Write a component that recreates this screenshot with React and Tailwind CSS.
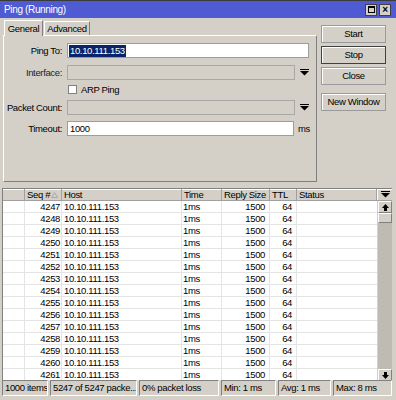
import React from "react";

const Arrow = () => (
  <svg width="9" height="7" viewBox="0 0 9 7" className="block">
    <rect x="0" y="0" width="9" height="1" fill="#000" />
    <polygon points="0,2 9,2 4.5,6.5" fill="#000" />
  </svg>
);

const ScrollUp = () => (
  <svg width="7" height="7" viewBox="0 0 7 7" className="block">
    <polygon points="3.5,0 7,4 0,4" fill="#000" />
    <rect x="2" y="4" width="3" height="3" fill="#000" />
  </svg>
);
const ScrollDown = () => (
  <svg width="7" height="7" viewBox="0 0 7 7" className="block">
    <rect x="2" y="0" width="3" height="3" fill="#000" />
    <polygon points="0,3 7,3 3.5,7" fill="#000" />
  </svg>
);

const SortUp = () => (
  <svg width="7" height="6" viewBox="0 0 7 6" className="block ml-[1px]">
    <polygon points="3.5,0.5 6.5,5.5 0.5,5.5" fill="none" stroke="#a8a8a8" strokeWidth="1" />
  </svg>
);

function Btn({ children, dark }) {
  return (
    <div
      className={
        "h-[18px] w-[65px] flex items-center justify-center bg-[#d4d0c8] border whitespace-nowrap " +
        (dark
          ? "border-[#404040] shadow-[inset_1px_1px_0_#ffffff]"
          : "border-[#9a9a9a] shadow-[inset_1px_1px_0_#ffffff]")
      }
    >
      {children}
    </div>
  );
}

export default function App() {
  const rows = Array.from({ length: 15 }, (_, i) => 4247 + i);
  return (
    <div className="w-[396px] h-[400px] bg-[#d4d0c8] flex flex-col overflow-hidden text-black text-[9.5px] leading-[12px] tracking-[-0.35px] whitespace-nowrap font-['Liberation_Sans',Arial,sans-serif]">
      {/* title bar */}
      <div className="h-[18px] border-t border-[#3a3a3a] bg-[#4f5bd2] flex items-center pl-[4px] pr-[5px]">
        <span className="text-white text-[10px] flex-1">Ping (Running)</span>
        <div className="flex gap-[2px]">
          <div className="w-[12px] h-[12px] bg-[#d4d0c8] border border-[#404040] flex items-center justify-center">
            <div className="w-[7px] h-[7px] border border-black border-t-2" />
          </div>
          <div className="w-[12px] h-[12px] bg-[#d4d0c8] border border-[#404040] flex items-center justify-center text-[10px] font-bold leading-none">
            ×
          </div>
        </div>
      </div>

      {/* upper area */}
      <div className="flex h-[164px]">
        <div className="ml-[3px] w-[314px] flex flex-col">
          <div className="h-[17px] flex items-end">
            <div className="h-[16px] w-[39px] ml-[1px] bg-[#d4d0c8] border-t border-l border-white border-r border-r-[#808080] flex items-center justify-center relative top-[1px] z-10">
              General
            </div>
            <div className="h-[14px] w-[46px] ml-[1px] bg-[#d4d0c8] border-t border-l border-white border-r border-r-[#808080] flex items-center justify-center">
              Advanced
            </div>
          </div>
          <div className="h-[147px] border border-t-white border-l-white border-b-[#808080] border-r-[#808080] flex flex-col pt-[7px]">
            {/* Ping To */}
            <div className="flex items-center h-[15px]">
              <div className="w-[59px] text-right pr-[1px]">Ping To:</div>
              <div className="ml-[4px] w-[242px] h-[15px] bg-white border border-[#9d9d9d] flex items-center pl-[1px]">
                <span className="bg-[#0a246a] text-white px-[1px]">10.10.111.153</span>
              </div>
            </div>
            {/* Interface */}
            <div className="flex items-center h-[15px] mt-[7px]">
              <div className="w-[59px] text-right pr-[1px] text-[#222]">Interface:</div>
              <div className="ml-[4px] w-[228px] h-[15px] bg-[#d4d0c8] border border-[#a8a8a8]" />
              <div className="ml-[5px]"><Arrow /></div>
            </div>
            {/* ARP */}
            <div className="flex items-center h-[11px] mt-[4px]">
              <div className="ml-[64px] w-[9px] h-[9px] bg-white border border-[#808080]" />
              <span className="ml-[4px]">ARP Ping</span>
            </div>
            {/* Packet count */}
            <div className="flex items-center h-[15px] mt-[5px]">
              <div className="w-[59px] text-right pr-[1px]">Packet Count:</div>
              <div className="ml-[4px] w-[228px] h-[15px] bg-[#d4d0c8] border border-[#a8a8a8]" />
              <div className="ml-[5px]"><Arrow /></div>
            </div>
            {/* Timeout */}
            <div className="flex items-center h-[15px] mt-[6px]">
              <div className="w-[59px] text-right pr-[1px]">Timeout:</div>
              <div className="ml-[4px] w-[227px] h-[15px] bg-white border border-[#9d9d9d] flex items-center pl-[2px]">
                1000
              </div>
              <span className="ml-[4px]">ms</span>
            </div>
          </div>
        </div>
        <div className="ml-[4px] flex flex-col pt-[7px]">
          <Btn>Start</Btn>
          <div className="mt-[3px]"><Btn dark>Stop</Btn></div>
          <div className="mt-[3px]"><Btn>Close</Btn></div>
          <div className="mt-[8px]"><Btn>New Window</Btn></div>
        </div>
      </div>

      {/* table */}
      <div className="mt-[6px] ml-[2px] w-[390px] h-[192px] border-t border-l border-[#808080] flex flex-col bg-white">
        <div className="h-[12px] flex bg-[#d4d0c8] border-b border-[#a0a0a0] shadow-[inset_0_1px_0_#ffffff]">
          <div className="w-[22px] border-r border-[#a0a0a0]" />
          <div className="w-[37px] border-r border-[#a0a0a0] pl-[2px] flex items-center">
            Seq #<SortUp />
          </div>
          <div className="w-[120px] border-r border-[#a0a0a0] pl-[2px]">Host</div>
          <div className="w-[40px] border-r border-[#a0a0a0] pl-[2px]">Time</div>
          <div className="w-[48px] border-r border-[#a0a0a0] pl-[2px]">Reply Size</div>
          <div className="w-[27px] border-r border-[#a0a0a0] pl-[2px]">TTL</div>
          <div className="w-[80px] border-r border-[#a0a0a0] pl-[2px]">Status</div>
          <div className="flex-1 flex items-center justify-center border-l border-white"><Arrow /></div>
        </div>
        <div className="flex h-[180px]">
          <div className="w-[374px] flex flex-col">
            {rows.map((n) => (
              <div key={n} className="h-[12px] flex border-b border-[#e4e4e4]">
                <div className="w-[22px] border-r border-[#e4e4e4]" />
                <div className="w-[37px] border-r border-[#e4e4e4] text-right pr-[1px]">{n}</div>
                <div className="w-[120px] border-r border-[#e4e4e4] pl-[2px]">10.10.111.153</div>
                <div className="w-[40px] border-r border-[#e4e4e4] pl-[1px]">1ms</div>
                <div className="w-[48px] border-r border-[#e4e4e4] text-right pr-[4px]">1500</div>
                <div className="w-[27px] border-r border-[#e4e4e4] text-right pr-[4px]">64</div>
                <div className="w-[80px]" />
              </div>
            ))}
          </div>
          <div className="flex-1 bg-[#bfbbb3] flex flex-col border-l border-[#d4d0c8]">
            <div className="h-[12px] bg-[#d4d0c8] border border-t-white border-l-white border-b-[#808080] border-r-[#808080] flex items-center justify-center">
              <ScrollUp />
            </div>
            <div className="h-[10px] bg-[#d4d0c8] border border-t-white border-l-white border-b-[#808080] border-r-[#808080]" />
            <div className="flex-1" />
            <div className="h-[12px] bg-[#d4d0c8] border border-t-white border-l-white border-b-[#808080] border-r-[#808080] flex items-center justify-center">
              <ScrollDown />
            </div>
          </div>
        </div>
      </div>

      {/* status bar */}
      <div className="ml-[2px] flex gap-[2px] h-[16px]">
        {[
          ["1000 items", 46],
          ["5247 of 5247 packe...", 87],
          ["0% packet loss", 80],
          ["Min: 1 ms", 55],
          ["Avg: 1 ms", 53],
          ["Max: 8 ms", 59],
        ].map(([t, w]) => (
          <div
            key={t}
            style={{ width: w }}
            className="h-[16px] border border-t-[#808080] border-l-[#808080] border-b-white border-r-white pl-[2px] flex items-center overflow-hidden"
          >
            {t}
          </div>
        ))}
      </div>
    </div>
  );
}
